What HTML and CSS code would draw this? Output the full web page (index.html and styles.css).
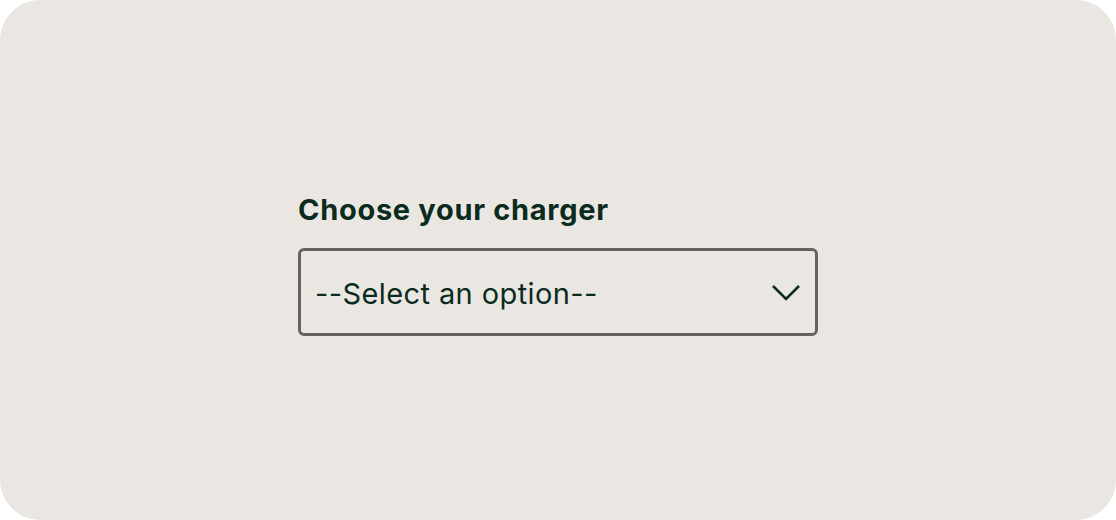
FILE: index.html
```html
<!DOCTYPE html>
<html lang="en">
<head>
<meta charset="utf-8">
<title>Choose your charger</title>
<link rel="stylesheet" href="styles.css">
</head>
<body>
<div class="card">
  <div class="field">
    <label class="label" for="charger">Choose your charger</label>
    <div class="select" id="charger">
      <span class="select-text">--Select an option--</span>
      <svg class="chevron" width="30" height="18" viewBox="0 0 30 18" aria-hidden="true">
        <path d="M2 3 L15 16 L28 3" fill="none" stroke="#0c2b1f" stroke-width="2.6" stroke-linecap="butt" stroke-linejoin="miter"/>
      </svg>
    </div>
  </div>
</div>
</body>
</html>
```
FILE: styles.css
```css
html, body {
  margin: 0;
  padding: 0;
  background: #ffffff;
}
.card {
  width: 1116px;
  height: 520px;
  box-sizing: border-box;
  background: #eae7e2;
  border-radius: 40px;
  display: flex;
  justify-content: center;
  padding-top: 190px;
}
.field {
  width: 520px;
  display: flex;
  flex-direction: column;
  gap: 18px;
}
.label {
  font-family: Inter, "Noto Sans", sans-serif;
  font-weight: 700;
  font-size: 29px;
  line-height: 40px;
  color: #0c2b1f;
  letter-spacing: 0.7px;
}
.select {
  height: 88px;
  box-sizing: border-box;
  border: 3px solid #67625c;
  border-radius: 6px;
  display: flex;
  align-items: center;
  justify-content: space-between;
  padding: 3px 14px 0 14px;
}
.select-text {
  font-family: Inter, "Noto Sans", sans-serif;
  font-weight: 400;
  font-size: 29px;
  letter-spacing: 0.4px;
  color: #0c2b1f;
}
.chevron {
  display: block;
  margin-top: -3px;
}
```
